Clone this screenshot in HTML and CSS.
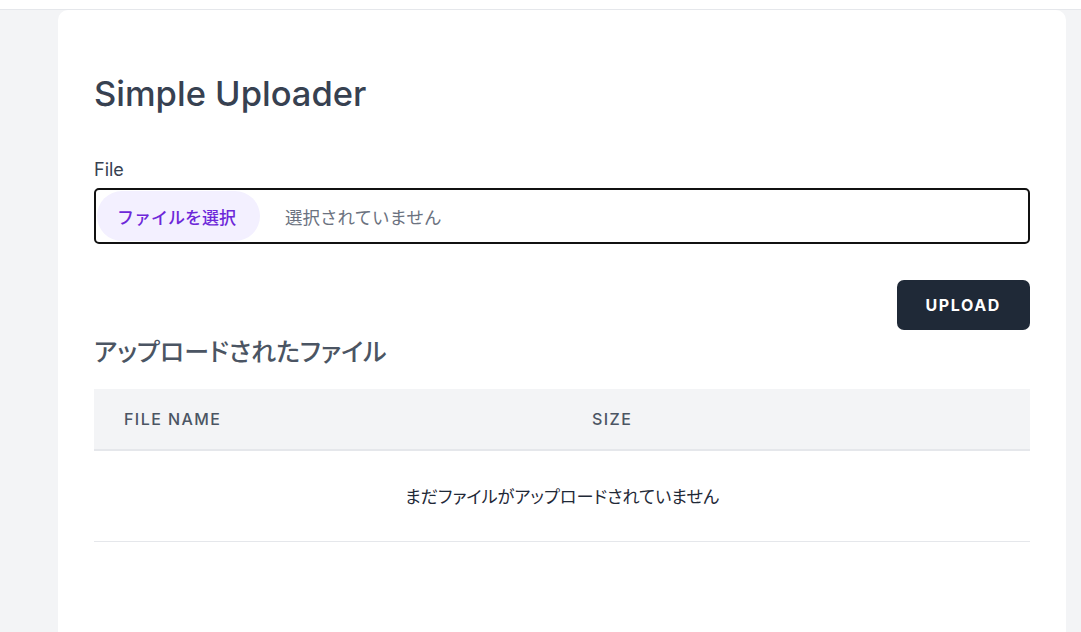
FILE: index.html
```html
<!DOCTYPE html>
<html lang="ja">
<head>
<meta charset="utf-8">
<title>Simple Uploader</title>
<link rel="stylesheet" href="styles.css">
</head>
<body>
<div class="topbar"></div>
<main class="page">
  <section class="card">
    <h1 class="title">Simple Uploader</h1>
    <form class="form">
      <label class="label">File</label>
      <div class="file-input">
        <span class="file-btn">ファイルを選択</span>
        <span class="file-none">選択されていません</span>
      </div>
      <div class="actions">
        <button type="button" class="upload-btn">Upload</button>
      </div>
    </form>
    <h2 class="subtitle">アップロードされたファイル</h2>
    <table class="files">
      <thead>
        <tr><th>File Name</th><th>Size</th></tr>
      </thead>
      <tbody>
        <tr><td colspan="2" class="empty">まだファイルがアップロードされていません</td></tr>
      </tbody>
    </table>
  </section>
</main>
</body>
</html>
```
FILE: styles.css
```css
* { box-sizing: border-box; }
html, body { margin: 0; padding: 0; }
body {
  background: #f3f4f6;
  font-family: Inter, "Noto Sans CJK JP", sans-serif;
  color: #1f2937;
  height: 632px;
  overflow: hidden;
}
.topbar {
  height: 10px;
  background: #ffffff;
  border-bottom: 1px solid #e5e7eb;
}
.page {
  padding: 0 15px 0 58px;
}
.card {
  background: #ffffff;
  border-radius: 10px;
  width: 1008px;
  min-height: 640px;
  padding: 36px 36px;
  margin-top: 0;
}
.title {
  margin: 28px 0 0;
  font-size: 34.5px;
  font-weight: 500;
  color: #374151;
  line-height: 40px;
}
.form { margin-top: 44px; }
.label {
  display: block;
  font-size: 18px;
  color: #374151;
  line-height: 24px;
  margin-bottom: 6px;
}
.file-input {
  display: flex;
  align-items: center;
  height: 56px;
  border: 2px solid #111111;
  border-radius: 5px;
  padding: 1px;
}
.file-btn {
  display: flex;
  align-items: center;
  height: 50px;
  padding: 0 24px 0 20px;
  background: #f3f0ff;
  color: #6d28d9;
  border-radius: 25px;
  font-family: "Noto Sans CJK JP", sans-serif;
  font-size: 17px;
  font-weight: 500;
}
.file-none {
  margin-left: 25px;
  color: #6b7280;
  font-family: "Noto Sans CJK JP", sans-serif;
  font-size: 17.5px;
}
.actions {
  display: flex;
  justify-content: flex-end;
  margin-top: 36px;
}
.upload-btn {
  height: 50px;
  padding: 0 29px;
  background: #1f2937;
  color: #ffffff;
  border: 0;
  border-radius: 7px;
  font-family: Inter, sans-serif;
  font-size: 16px;
  font-weight: 700;
  letter-spacing: 0.1em;
  text-transform: uppercase;
}
.subtitle {
  margin: 0;
  font-family: "Noto Sans CJK JP", sans-serif;
  font-size: 25px;
  font-weight: 500;
  color: #4b5563;
  line-height: 40px;
  font-feature-settings: "palt";
}
.files {
  width: 100%;
  margin-top: 19px;
  border-collapse: collapse;
}
.files th {
  width: 50%;
  height: 61px;
  background: #f3f4f6;
  border-bottom: 2px solid #e5e7eb;
  text-align: left;
  padding: 0 30px;
  font-size: 16px;
  font-weight: 500;
  color: #4b5563;
  letter-spacing: 0.09em;
  text-transform: uppercase;
}
.files td.empty {
  height: 91px;
  text-align: center;
  font-family: "Noto Sans CJK JP", sans-serif;
  font-size: 17.2px;
  color: #1f2937;
  border-bottom: 1px solid #e5e7eb;
  font-feature-settings: "palt";
}
```
